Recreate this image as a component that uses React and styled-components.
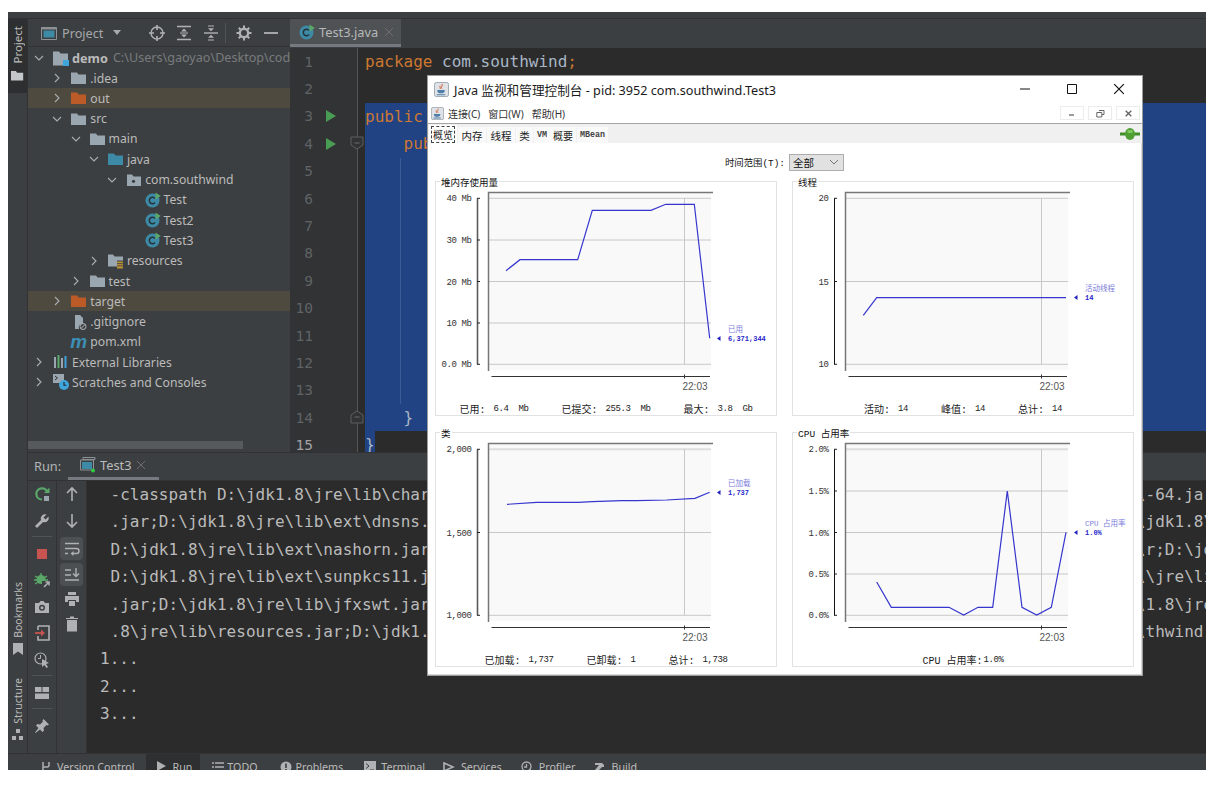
import React from "react";
import styled, { createGlobalStyle } from "styled-components";

const GlobalStyle = createGlobalStyle`
  html, body { margin: 0; padding: 0; background: #fff; }
  #root { padding: 12px 13px 17px 8px; width: 1198px; }
  * { box-sizing: border-box; }
`;

const UI = `"Noto Sans", "Noto Sans CJK SC", sans-serif`;
const MONO = `"DejaVu Sans Mono", monospace`;
const JAVA = `"Liberation Mono", "Noto Sans CJK SC", monospace`;
const ROW = 27.4;

/* ---------- icons ---------- */
const Svg = styled.svg`
  display: block;
  flex: none;
`;
const Ic = ({ s = 16, w, h, children, vb = "0 0 16 16" }) => (
  <Svg width={w || s} height={h || s} viewBox={vb}>{children}</Svg>
);

const Folder = ({ color = "#9aa7b0", s = 16 }) => (
  <Ic s={s}><path d="M0 2.5h6l1.5 2H15v9.5H0z" fill={color} /></Ic>
);
const PackageFolder = () => (
  <Ic><path d="M1 2.5h5l1.5 2H15v9.5H1z" fill="#9aa7b0" /><circle cx="7.5" cy="9.3" r="1.6" fill="#3c3f41" /></Ic>
);
const ResFolder = () => (
  <Ic>
    <path d="M0 1.5h5l1.5 2H15v4H9v6H0z" fill="#9aa7b0" />
    <path d="M9 8.5h6v7H9z" fill="#b8903a" />
    <path d="M9 10.6h6M9 12.8h6" stroke="#3c3f41" strokeWidth=".8" />
  </Ic>
);
const ModuleFolder = () => (
  <Ic>
    <path d="M0 1.5h6l1.5 2H15v7H10v5H0z" fill="#9aa7b0" />
    <path d="M10 10h6v6h-6z" fill="#3fa6dc" />
  </Ic>
);
const ClassIcon = () => (
  <Ic>
    <circle cx="7.5" cy="8.5" r="7" fill="#3d8aa6" />
    <path d="M10 6.5a3.2 3.2 0 1 0 0 4" fill="none" stroke="#26333a" strokeWidth="1.5" />
    <path d="M10.5 .5 15.8 4l-5.3 3.5z" fill="#59a869" />
  </Ic>
);
const GitIgnoreIcon = () => (
  <Ic>
    <path d="M4 1h5l3 3v5.5a4 4 0 0 0-4 5.5H4z" fill="#9aa7b0" />
    <circle cx="12" cy="12.5" r="3" fill="none" stroke="#aeb6bb" strokeWidth="1" />
    <path d="m10 14.5 4-4" stroke="#aeb6bb" />
  </Ic>
);
const PomGlyph = styled.span`
  width: 16px;
  font: italic 800 19px/16px "Liberation Sans", sans-serif;
  color: #3d8fb5;
  flex: none;
  margin: 0 1px 0 -1px;
`;
const LibIcon = () => (
  <Ic>
    <path d="M1 3h2v11H1z" fill="#9aa7b0" />
    <path d="M4.5 1h2v13h-2z" fill="#59a869" />
    <path d="M8 4h2v10H8z" fill="#9aa7b0" />
    <path d="M11.5 2h2v12h-2z" fill="#40a0d8" />
  </Ic>
);
const ScratchIcon = () => (
  <Ic>
    <path d="M0 0h11v9H0z" fill="#9aa7b0" />
    <path d="m2 2 2.5 2L2 6" fill="none" stroke="#333" />
    <circle cx="11" cy="11" r="5" fill="#3fa6dc" />
    <path d="M11 8v3.3h2.4" fill="none" stroke="#223" strokeWidth="1.1" />
  </Ic>
);
const Chevron = ({ open }) => (
  <Ic s={12} vb="0 0 12 12">
    <path
      d={open ? "M2 4l4 4 4-4" : "M4 2l4 4-4 4"}
      fill="none"
      stroke="#a9aeb2"
      strokeWidth="1.1"
    />
  </Ic>
);
const ProjectViewIcon = () => (
  <Ic>
    <path d="M.5 2.5h15v12H.5z" fill="none" stroke="#8c9296" />
    <path d="M.5 2.5h15v2H.5z" fill="#8c9296" />
    <path d="M2.5 5.5h11v7h-11z" fill="#3d8aa6" />
  </Ic>
);
const G = "#afb1b3";
const LocateIcon = () => (
  <Ic>
    <circle cx="8" cy="8" r="6" fill="none" stroke={G} strokeWidth="1.4" />
    <path d="M8 0v5M8 11v5M0 8h5M11 8h5" stroke={G} strokeWidth="1.6" />
  </Ic>
);
const ExpandIcon = () => (
  <Ic>
    <path d="M1 1.5h14M1 14.5h14" stroke={G} strokeWidth="1.4" />
    <path d="M8 3.5l3 3H5zM8 12.5l-3-3h6z" fill={G} />
    <path d="M4 8h8" stroke={G} />
  </Ic>
);
const CollapseIcon = () => (
  <Ic>
    <path d="M1 8h14" stroke={G} strokeWidth="1.4" />
    <path d="M8 6.3l-3-3h6zM8 9.7l3 3H5z" fill={G} />
    <path d="M5 1h6M5 15h6" stroke={G} />
  </Ic>
);
const GearIcon = () => (
  <Ic>
    <circle cx="8" cy="8" r="4.2" fill="none" stroke={G} strokeWidth="2.4" />
    <path d="M8 .5v3M8 12.5v3M.5 8h3M12.5 8h3M2.7 2.7l2.1 2.1M11.2 11.2l2.1 2.1M13.3 2.7l-2.1 2.1M4.8 11.2l-2.1 2.1" stroke={G} strokeWidth="2" />
  </Ic>
);
const MinusIcon = () => (
  <Ic><path d="M1 8h14" stroke={G} strokeWidth="1.8" /></Ic>
);
const RunArrow = () => (
  <Ic s={14} vb="0 0 14 14"><path d="M2 1l10 6-10 6z" fill="#499c54" /></Ic>
);
const FoldIcon = ({ up }) => (
  <Ic s={14} vb="0 0 14 14">
    <path
      d={up ? "M1 13V5l6-4 6 4v8z" : "M1 1v8l6 4 6-4V1z"}
      fill="#313335"
      stroke="#5d5f61"
    />
    <path d="M4.5 7h5" stroke="#6b6d6f" />
  </Ic>
);
const Close = ({ color = "#6e6e6e", s = 10, sw = 1 }) => (
  <Ic s={s} vb="0 0 10 10">
    <path d="M1 1l8 8M9 1l-8 8" stroke={color} strokeWidth={sw} />
  </Ic>
);
const RunTabIcon = () => (
  <Ic>
    <path d="M3 .5h12v2H3z" fill="none" stroke="#8c9296" />
    <path d="M.5 3h13v10H.5z" fill="#3c3f41" stroke="#8c9296" />
    <path d="M2 5h10v7H2z" fill="#3d8aa6" />
    <circle cx="13" cy="13.5" r="2" fill="#2ecc40" />
  </Ic>
);

const RerunIcon = () => (
  <Ic>
    <path d="M13.5 7A5.6 5.6 0 1 0 8 13.5" fill="none" stroke="#59a869" strokeWidth="2.2" />
    <path d="M10 7h5.5V1.5z" fill="#59a869" />
    <path d="M10 10h5v5h-5z" fill="#9aa7b0" />
  </Ic>
);
const WrenchIcon = () => (
  <Ic>
    <path d="M14.5 3.5l-3 3-2-2 3-3a4.2 4.2 0 0 0-5.4 5.4L1 13l2 2 6.1-6.1a4.2 4.2 0 0 0 5.4-5.4z" fill={G} />
  </Ic>
);
const StopIcon = () => (
  <Ic s={12} vb="0 0 12 12"><path d="M1 1h10v10H1z" fill="#c75450" /></Ic>
);
const DebugIcon = () => (
  <Ic>
    <circle cx="7" cy="7.5" r="4.5" fill="#59a869" />
    <path d="M1 4l3 2M13 4l-3 2M0 8h3M14 8h-3M1 12l3-2M13 12l-3-2M7 1v3" stroke="#59a869" strokeWidth="1.4" />
    <path d="M8 9h8v7H8z" fill="#3c3f41" />
    <path d="M10 15l5-5M11.5 10h3.5v3.5" fill="none" stroke={G} strokeWidth="1.5" />
  </Ic>
);
const CameraIcon = () => (
  <Ic>
    <path d="M1 4h4l1.5-2h3L11 4h4v10H1z" fill={G} />
    <circle cx="8" cy="8.8" r="3" fill="#3c3f41" />
    <circle cx="8" cy="8.8" r="1.5" fill={G} />
  </Ic>
);
const ExitIcon = () => (
  <Ic>
    <path d="M4 1h11v14H4v-4M4 5V1" fill="none" stroke={G} strokeWidth="1.6" />
    <path d="M1 8h8" stroke="#c75450" strokeWidth="1.8" />
    <path d="M7 4.5 11 8 7 11.5z" fill="#c75450" />
  </Ic>
);
const ThreadIcon = () => (
  <Ic>
    <circle cx="6.5" cy="6.5" r="5.5" fill="none" stroke={G} strokeWidth="1.2" />
    <path d="M6.5 3v3.5H4" fill="none" stroke={G} />
    <path d="M8 7l7 4-3 1 2 3-1.5 1-2-3-2.5 2z" fill={G} />
  </Ic>
);
const LayoutIcon = () => (
  <Ic>
    <path d="M1 2h6.5v5H1zM8.5 2H15v5H8.5zM1 8.5h14V14H1z" fill={G} />
  </Ic>
);
const PinIcon = () => (
  <Ic>
    <path d="M9.5 1 15 6.5l-1.5 1-1-.5-3 3 .5 2.5-1.5 1.5-2.5-2.5L1.5 15 1 14.5l3.5-4.5L2 7.5 3.5 6l2.5.5 3-3-.5-1z" fill={G} />
  </Ic>
);
const UpIcon = () => (
  <Ic><path d="M8 15V2M3 7l5-5 5 5" fill="none" stroke={G} strokeWidth="1.6" /></Ic>
);
const DownIcon = () => (
  <Ic><path d="M8 1v13M3 9l5 5 5-5" fill="none" stroke={G} strokeWidth="1.6" /></Ic>
);
const WrapIcon = () => (
  <Ic>
    <path d="M1 2.5h14M1 7.5h11.5a2.5 2.5 0 0 1 0 5H8M1 12.5h3" fill="none" stroke={G} strokeWidth="1.4" />
    <path d="M9.5 10v5L6.5 12.5z" fill={G} />
  </Ic>
);
const ScrollEndIcon = () => (
  <Ic>
    <path d="M1 3h6M1 8h6M1 13h14" stroke={G} strokeWidth="1.4" />
    <path d="M12 1v8M9 6.5l3 3 3-3" fill="none" stroke={G} strokeWidth="1.4" />
  </Ic>
);
const PrintIcon = () => (
  <Ic>
    <path d="M4 1h8v3H4zM1 5h14v6H12V9H4v2H1zM5 10h6v5H5z" fill={G} />
  </Ic>
);
const TrashIcon = () => (
  <Ic>
    <path d="M3 4h10v11.5H3zM2 2h12v1H2zM6 .5h4V2H6z" fill={G} />
  </Ic>
);

const BarBranch = () => (
  <Ic s={12} vb="0 0 12 12"><path d="M3 1v10M9 1v3a2 2 0 0 1-2 2H3" fill="none" stroke={G} strokeWidth="1.5" /></Ic>
);
const BarRun = () => (
  <Ic s={12} vb="0 0 12 12">
    <path d="M1 0l9 5-9 5z" fill={G} />
    <path d="M8 9h4v3H8z" fill="#59a869" />
  </Ic>
);
const BarList = () => (
  <Ic s={12} vb="0 0 12 12"><path d="M0 2h2M3 2h9M0 6h2M3 6h9M0 10h2M3 10h9" stroke={G} strokeWidth="1.4" /></Ic>
);
const BarProblem = () => (
  <Ic s={12} vb="0 0 12 12">
    <circle cx="6" cy="6" r="5.5" fill={G} />
    <path d="M6 2.5V7M6 8v1.8" stroke="#3c3f41" strokeWidth="1.6" />
  </Ic>
);
const BarTerm = () => (
  <Ic s={12} vb="0 0 12 12">
    <path d="M0 0h12v12H0z" fill={G} />
    <path d="M2 2.5 5 5 2 7.5M6 9h4" fill="none" stroke="#3c3f41" />
  </Ic>
);
const BarServices = () => (
  <Ic s={12} vb="0 0 12 12"><path d="M1 2l9 4-9 4z" fill="none" stroke={G} strokeWidth="1.6" /></Ic>
);
const BarProfiler = () => (
  <Ic s={12} vb="0 0 12 12">
    <circle cx="5.5" cy="5.5" r="4.5" fill="none" stroke={G} strokeWidth="1.3" />
    <path d="M5.5 3v3H3M8 8l3.5 3.5" fill="none" stroke={G} strokeWidth="1.3" />
  </Ic>
);
const BarBuild = () => (
  <Ic s={12} vb="0 0 12 12"><path d="M1 2h7l2 2v2H8L3 11 1 9l4-5H1z" fill={G} /></Ic>
);

/* window-side icons */
const JavaIcon = ({ s = 15 }) => (
  <Ic s={s}>
    <rect x=".5" y=".5" width="15" height="15" rx="2" fill="#dfe3e8" stroke="#9aa3ad" />
    <path d="M8.5 2c1.5 2-2 3 0 5M6.5 4c-1 1.5 1 2 0 3.5" fill="none" stroke="#d0542a" strokeWidth="1" />
    <path d="M3.5 8.5h8c0 3-1.5 3.5-4 3.5s-4-.5-4-3.5zM3 13h9v1H3z" fill="#4f7fa8" />
  </Ic>
);
const ConnectedIcon = () => (
  <Ic w={20} h={12} vb="0 0 20 12">
    <path d="M0 4.5h20v3H0z" fill="#3f8f2a" />
    <ellipse cx="10" cy="6" rx="5" ry="6" fill="#4f9f35" />
    <path d="M7.5 2h5v3h-5z" fill="#7fc860" />
  </Ic>
);

/* ---------- shell ---------- */
const Ide = styled.div`
  width: 1198px;
  height: 758px;
  position: relative;
  overflow: hidden;
  background: #3c3f41;
  display: flex;
  flex-direction: column;
  font-family: ${UI};
  color: #bbbbbb;
`;
const TopStrip = styled.div`
  height: 7px;
  flex: none;
  background: #3c3f41;
  border-bottom: 1px solid #323232;
`;
const Main = styled.div`
  flex: 1;
  min-height: 0;
  display: flex;
`;
const Stripe = styled.div`
  width: 20px;
  flex: none;
  display: flex;
  flex-direction: column;
  align-items: center;
  border-right: 1px solid #323232;
`;
const StripeTab = styled.div`
  width: 100%;
  display: flex;
  flex-direction: column;
  align-items: center;
  gap: ${(p) => p.$gap || 5}px;
  padding: ${(p) => p.$pad || "7px 0 11px"};
  background: ${(p) => (p.$active ? "#2d2f30" : "transparent")};
`;
const StripeLabel = styled.span`
  writing-mode: vertical-rl;
  transform: rotate(180deg);
  font-size: ${(p) => p.$size || 11.5}px;
  line-height: 14px;
`;
const Spacer = styled.div`
  flex: 1;
`;
const Center = styled.div`
  flex: 1;
  min-width: 0;
  display: flex;
  flex-direction: column;
`;
const TopRow = styled.div`
  height: 433px;
  flex: none;
  display: flex;
  overflow: hidden;
`;

/* ---------- project panel ---------- */
const ProjectPanel = styled.div`
  width: 262px;
  flex: none;
  display: flex;
  flex-direction: column;
  position: relative;
  overflow: hidden;
`;
const PanelHeader = styled.div`
  height: 28px;
  flex: none;
  display: flex;
  align-items: center;
  padding-left: 13px;
  border-bottom: 1px solid #323232;
`;
const HeaderTitle = styled.span`
  margin-left: 5px;
  width: 58px;
  font-size: 12.7px;
  color: #a6a9ab;
`;
const Caret = styled.span`
  width: 0;
  height: 0;
  border-left: 4.5px solid transparent;
  border-right: 4.5px solid transparent;
  border-top: 5px solid #a6a9ab;
  margin-right: 28px;
`;
const HeaderBtn = styled.span`
  width: 27px;
  flex: none;
  display: flex;
  justify-content: flex-start;
`;
const HeaderSep = styled.span`
  width: 1px;
  height: 20px;
  background: #515355;
  margin-right: 10px;
  margin-left: -5px;
`;
const Tree = styled.div`
  flex: 1;
  min-height: 0;
  padding-top: .6px;
`;
const TreeRow = styled.div`
  height: 20.3px;
  display: flex;
  align-items: center;
  white-space: nowrap;
  padding-left: ${(p) => 5 + p.$level * 18.3}px;
  background: ${(p) => (p.$excluded ? "#4f4a40" : "transparent")};
`;
const ChevSlot = styled.span`
  width: 20px;
  flex: none;
  display: flex;
`;
const RowText = styled.span`
  margin-left: 3px;
  font-weight: ${(p) => (p.$bold ? 700 : 400)};
  font-size: ${(p) => (p.$bold ? 12.7 : 12.2)}px;
`;
const PathHint = styled.span`
  margin-left: 5px;
  font-size: 12.6px;
  color: #787b7d;
`;
const HScroll = styled.div`
  position: absolute;
  left: 0;
  bottom: 3px;
  width: 215px;
  height: 8px;
  background: #575a5c;
`;

/* ---------- editor ---------- */
const Editor = styled.div`
  flex: 1;
  min-width: 0;
  display: flex;
  flex-direction: column;
  overflow: hidden;
  background: #2b2b2b;
`;
const TabBar = styled.div`
  height: 29px;
  flex: none;
  display: flex;
  background: #3c3f41;
`;
const FileTab = styled.div`
  width: 111px;
  height: 28px;
  background: #4e5254;
  border-bottom: 3px solid #747a80;
  display: flex;
  align-items: center;
  padding: 0 7px 0 9px;
  gap: 4px;
  font-size: 12.8px;
  color: #b6b9ba;
`;
const TabClose = styled.span`
  margin-left: auto;
`;
const CodeRow = styled.div`
  height: ${ROW}px;
  flex: none;
  display: flex;
`;
const GutterCell = styled.div`
  width: 68px;
  flex: none;
  position: relative;
  background: #313335;
  border-right: 1px solid #555;
  display: flex;
  align-items: center;
`;
const LineNo = styled.span`
  width: 23px;
  text-align: right;
  font: 14.5px ${MONO};
  color: ${(p) => (p.$current ? "#a4a3a3" : "#606366")};
`;
const RunSlot = styled.span`
  margin-left: 11px;
`;
const FoldSlot = styled.span`
  position: absolute;
  right: -7px;
  top: 6px;
`;
const CodeWrap = styled.div`
  flex: 1;
  min-width: 0;
  padding-left: 7px;
`;
const CodeLine = styled.div`
  position: relative;
  height: 100%;
  white-space: pre;
  font: 16px/${ROW}px ${MONO};
  color: #a9b7c6;
  background: ${(p) => (p.$sel ? "#214283" : "transparent")};
  width: ${(p) => (p.$short ? "9.6px" : "auto")};
  &::before {
    content: "";
    display: ${(p) => (p.$guide ? "block" : "none")};
    position: absolute;
    left: 35px;
    top: 0;
    bottom: 0;
    width: 1px;
    background: #3b5a96;
  }
`;
const Kw = styled.span`
  color: #cc7832;
`;

/* ---------- run panel ---------- */
const RunPanel = styled.div`
  flex: 1;
  min-height: 0;
  display: flex;
  flex-direction: column;
  border-top: 1px solid #323232;
`;
const RunHeader = styled.div`
  height: 28px;
  flex: none;
  display: flex;
  align-items: stretch;
  font-size: 12.8px;
  border-bottom: 1px solid #323232;
`;
const RunLabel = styled.span`
  margin: 0 0 2px 6px;
  width: 34px;
  align-self: center;
  color: #b0b3b5;
`;
const RunTab = styled.div`
  width: 91px;
  display: flex;
  align-items: center;
  gap: 4px;
  padding-left: 12px;
  border-bottom: 3px solid #747a80;
`;
const RunBody = styled.div`
  flex: 1;
  min-height: 0;
  display: flex;
`;
const ToolCol = styled.div`
  width: ${(p) => p.$w}px;
  flex: none;
  display: flex;
  flex-direction: column;
  align-items: center;
  border-right: 1px solid #323232;
`;
const ToolBtn = styled.div`
  width: 23px;
  height: ${(p) => p.$h || 26.5}px;
  flex: none;
  display: flex;
  align-items: center;
  justify-content: center;
  border-radius: 4px;
  background: ${(p) => (p.$on ? "#4c5052" : "transparent")};
  margin-top: ${(p) => (p.$on ? 3 : 0)}px;
`;
const ToolSep = styled.div`
  width: 20px;
  height: 1px;
  background: #515355;
  margin: 2px 0 3.5px;
  flex: none;
`;
const Console = styled.div`
  flex: 1;
  min-width: 0;
  background: #2b2b2b;
  overflow: hidden;
  padding-left: 13px;
`;
const ConsoleLine = styled.div`
  height: ${ROW}px;
  white-space: pre;
  font: 16px/${ROW}px ${MONO};
  letter-spacing: .04px;
  color: #bbbbbb;
  padding-left: ${(p) => (p.$out ? 0 : 10.5)}px;
`;

/* ---------- bottom bar ---------- */
const BottomBar = styled.div`
  height: 17px;
  flex: none;
  display: flex;
  overflow: hidden;
  padding-left: 24px;
  border-top: 1px solid #323232;
  font-size: 10.7px;
`;
const BarItem = styled.div`
  height: 26px;
  flex: none;
  display: flex;
  align-items: center;
  gap: ${(p) => p.$gap || 5}px;
  padding: 0 ${(p) => p.$pr}px 0 ${(p) => p.$pl}px;
  background: ${(p) => (p.$on ? "#2d2f30" : "transparent")};
`;

/* ---------- java window ---------- */
const JavaWindow = styled.div`
  position: absolute;
  left: 419px;
  top: 63px;
  width: 716px;
  height: 601px;
  background: #fff;
  border: 1px solid #9c9c9c;
  display: flex;
  flex-direction: column;
  color: #111;
  font-family: ${JAVA};
`;
const WinTitleBar = styled.div`
  height: 26px;
  flex: none;
  display: flex;
  align-items: center;
  padding-left: 6px;
  gap: 5px;
`;
const WinTitle = styled.span`
  font: 12.65px ${UI};
  color: #1a1a1a;
`;
const WinBtns = styled.div`
  margin-left: auto;
  display: flex;
  align-items: center;
`;
const WinBtn = styled.span`
  width: 47px;
  height: 26px;
  display: flex;
  align-items: center;
  justify-content: center;
`;
const MenuBar = styled.div`
  height: 22px;
  flex: none;
  display: flex;
  align-items: center;
  padding: 1px 2px 0 3px;
  border-bottom: 1px solid #a5a5a5;
  font: 10px ${UI};
  color: #333;
`;
const MenuItem = styled.span`
  margin-left: ${(p) => p.$ml}px;
`;
const MiniBtns = styled.div`
  margin-left: auto;
  display: flex;
  gap: 4px;
`;
const MiniBtn = styled.span`
  width: 24px;
  height: 14px;
  border: 1px solid #ececec;
  display: flex;
  align-items: center;
  justify-content: center;
`;
const TabStrip = styled.div`
  height: 19px;
  flex: none;
  display: flex;
  align-items: flex-end;
  gap: 1px;
  padding-left: 1px;
  background: #f0f0f0;
`;
const JTab = styled.div`
  width: ${(p) => p.$w}px;
  height: ${(p) => (p.$on ? 18 : 16)}px;
  background: ${(p) => (p.$on ? "#fff" : "#f9f9f9")};
  display: flex;
  align-items: center;
  justify-content: center;
  font-size: ${(p) => p.$size || 10.5}px;
  white-space: pre;
  color: #222;
`;
const Latin = styled.span`
  font-size: 8.4px;
  font-weight: 700;
  color: #444;
`;
const FocusBox = styled.span`
  padding: 0 1px;
  border: 1px dashed #444;
`;
const StripEnd = styled.span`
  margin-left: auto;
  align-self: center;
  margin-right: 2px;
`;
const Content = styled.div`
  flex: 1;
  min-height: 0;
  border-right: 1px solid #d8d8d8;
  border-bottom: 1px solid #d8d8d8;
  display: flex;
  flex-direction: column;
`;
const TimeRow = styled.div`
  height: 38px;
  flex: none;
  display: flex;
  align-items: center;
  justify-content: center;
  gap: 4px;
  font-size: 9.4px;
`;
const Combo = styled.div`
  width: 55px;
  height: 17px;
  background: #e1e1e1;
  border: 1px solid #adadad;
  display: flex;
  align-items: center;
  justify-content: space-between;
  padding: 0 4px 0 3px;
  font: 10.5px "Noto Sans CJK SC", sans-serif;
`;
const Grid = styled.div`
  display: grid;
  grid-template-columns: 342px 342px;
  grid-template-rows: 235px 235px;
  gap: 16px 15px;
  padding-left: 7px;
`;
const Panel = styled.div`
  position: relative;
  border: 1px solid #e2e2e2;
  display: flex;
  flex-direction: column;
`;
const PanelLegend = styled.span`
  position: absolute;
  left: 4px;
  top: -5px;
  padding: 0 1px;
  background: #fff;
  font-size: 9.5px;
  line-height: 14px;
  white-space: pre;
`;
const ChartSvg = styled.svg`
  display: block;
  flex: none;
`;
const AxisText = styled.text`
  font: 9px ${JAVA};
  letter-spacing: -.4px;
  fill: #333;
  text-anchor: end;
  white-space: pre;
`;
const TimeText = styled.text`
  font: 10px "Liberation Sans", sans-serif;
  fill: #555;
  text-anchor: middle;
`;
const LegendName = styled.text`
  font: 7.5px ${JAVA};
  fill: #7c7cdc;
`;
const LegendValue = styled.text`
  font: 700 7px ${JAVA};
  fill: #2525c8;
`;
const StatRow = styled.div`
  flex: 1;
  display: flex;
  justify-content: center;
  align-items: center;
  gap: 33px;
  padding-top: 6px;
  white-space: pre;
`;
const Stat = styled.span`
  display: flex;
  align-items: center;
  gap: ${(p) => (p.$tight ? 1 : 8)}px;
`;
const StatLabel = styled.span`
  font-size: 10px;
  color: #222;
`;
const StatValue = styled.span`
  font-size: 9px;
  letter-spacing: -.4px;
  color: #222;
`;

/* ---------- data ---------- */
const GRID5 = [17.3, 59, 100.5, 142, 183.3];
const GRID3 = [17.3, 100.5, 183.3];

const toPanel = (pts, dx, dy) =>
  pts.map(([x, y]) => `${(x / 3 - dx).toFixed(1)},${(y / 3 - dy).toFixed(1)}`).join(" ");

const CHARTS = [
  {
    key: "heap",
    title: "堆内存使用量",
    ticks: ["40 Mb", "30 Mb", "20 Mb", "10 Mb", "0.0 Mb"],
    grid: GRID5,
    axis: "#5a5a5a",
    axisW: 1.6,
    points: toPanel([[228, 272], [270, 239], [443, 239], [487, 91], [663, 91], [707, 73], [793, 73], [839, 475]], 5, 1),
    arrowY: 157.5,
    names: ["已用", "6,371,344"],
    nameY: 151,
    stats: [["已用:", "6.4  Mb"], ["已提交:", "255.3  Mb"], ["最大:", "3.8  Gb"]],
  },
  {
    key: "threads",
    title: "线程",
    ticks: ["20", "15", "10"],
    grid: GRID3,
    axis: "#111",
    axisW: 1,
    points: toPanel([[235, 406], [275, 353], [843, 353]], 7, 1),
    arrowY: 116.5,
    names: ["活动线程", "14"],
    nameY: 110,
    stats: [["活动:", "14"], ["峰值:", "14"], ["总计:", "14"]],
  },
  {
    key: "classes",
    title: "类",
    ticks: ["2,000", "1,500", "1,000"],
    grid: GRID3,
    axis: "#5a5a5a",
    axisW: 1.6,
    thick: true,
    points: toPanel([[231, 223], [320, 217], [445, 217], [487, 215], [575, 212], [620, 212], [710, 210], [795, 205], [839, 187]], 5, 2),
    arrowY: 60.5,
    names: ["已加载", "1,737"],
    nameY: 54,
    stats: [["已加载:", "1,737"], ["已卸载:", "1"], ["总计:", "1,738"]],
  },
  {
    key: "cpu",
    title: "CPU 占用率",
    ticks: ["2.0%", "1.5%", "1.0%", "0.5%", "0.0%"],
    grid: GRID5,
    axis: "#111",
    axisW: 1,
    thick: true,
    points: toPanel([[275, 456], [319, 532], [492, 532], [536, 555], [579, 532], [623, 532], [667, 183], [711, 532], [755, 555], [799, 532], [843, 307]], 7, 2),
    arrowY: 100.5,
    names: ["CPU 占用率", "1.0%"],
    nameY: 94,
    tight: true,
    stats: [["CPU 占用率:", "1.0%"]],
  },
];

const Chart = ({ c }) => (
  <ChartSvg width={340} height={213} viewBox="1 1 340 213">
    <rect x="54" y="12" width="222" height="177" fill="#f9f9f9" />
    {c.grid.map((y, i) => (
      <path
        key={y}
        d={`M54 ${y}H276`}
        stroke={c.thick && i === 0 ? "#dedede" : "#c8c8c8"}
        strokeWidth={c.thick && i === 0 ? 2 : 1}
      />
    ))}
    <path d="M249.5 17V183" stroke="#c8c8c8" />
    <path d="M53.5 190V11.5H278" fill="none" stroke="#777" strokeWidth="1.5" />
    <path d="M42.5 17.3V183.3" stroke={c.axis} strokeWidth={c.axisW} />
    {c.grid.map((y, i) => (
      <g key={y}>
        <path d={`M42 ${y}h3`} stroke="#222" />
        <AxisText x="36.5" y={y + 3}>{c.ticks[i]}</AxisText>
      </g>
    ))}
    <path d="M56.5 195.5H275" stroke="#333" />
    <path d="M249.5 193.5v4" stroke="#333" />
    <TimeText x="260" y="209">22:03</TimeText>
    <polyline points={c.points} fill="none" stroke="#3636cf" strokeWidth="1.2" />
    <path d={`M285.5 ${c.arrowY - 2.5}v5l-3.5-2.5z`} fill="#2020c0" />
    <LegendName x="293" y={c.nameY}>{c.names[0]}</LegendName>
    <LegendValue x="293" y={c.arrowY + 2.5}>{c.names[1]}</LegendValue>
  </ChartSvg>
);

const ChartPanel = ({ c }) => (
  <Panel>
    <PanelLegend>{c.title}</PanelLegend>
    <Chart c={c} />
    <StatRow>
      {c.stats.map(([l, v]) => (
        <Stat key={l} $tight={c.tight}>
          <StatLabel>{l}</StatLabel>
          <StatValue>{v}</StatValue>
        </Stat>
      ))}
    </StatRow>
  </Panel>
);

const F = "#9aa7b0";
const TREE = [
  { l: 0, open: true, icon: <ModuleFolder />, text: "demo", bold: true, hint: "C:\\Users\\gaoyao\\Desktop\\code\\demo" },
  { l: 1, icon: <Folder color={F} />, text: ".idea" },
  { l: 1, icon: <Folder color="#bd5b28" />, text: "out", ex: true },
  { l: 1, open: true, icon: <Folder color={F} />, text: "src" },
  { l: 2, open: true, icon: <Folder color={F} />, text: "main" },
  { l: 3, open: true, icon: <Folder color="#3d8aa6" />, text: "java" },
  { l: 4, open: true, icon: <PackageFolder />, text: "com.southwind" },
  { l: 5, leaf: true, icon: <ClassIcon />, text: "Test" },
  { l: 5, leaf: true, icon: <ClassIcon />, text: "Test2" },
  { l: 5, leaf: true, icon: <ClassIcon />, text: "Test3" },
  { l: 3, icon: <ResFolder />, text: "resources" },
  { l: 2, icon: <Folder color={F} />, text: "test" },
  { l: 1, icon: <Folder color="#bd5b28" />, text: "target", ex: true },
  { l: 1, leaf: true, icon: <GitIgnoreIcon />, text: ".gitignore" },
  { l: 1, leaf: true, icon: <PomGlyph>m</PomGlyph>, text: "pom.xml" },
  { l: 0, icon: <LibIcon />, text: "External Libraries" },
  { l: 0, icon: <ScratchIcon />, text: "Scratches and Consoles" },
];

const CODE = [
  <><Kw>package</Kw> com.southwind<Kw>;</Kw></>,
  "",
  <><Kw>public class</Kw> Test3 {"{"}</>,
  <>    <Kw>public static void</Kw> main(String[] args) {"{"}</>,
  "", "", "", "", "", "", "", "", "",
  "    }",
  "}",
];

const COL = 107;
const FILL = "access-bridge-64.jar;D:\\jdk1.8\\jre\\lib\\ext\\cldrdata.jar;D:\\jdk1.8\\jre\\lib\\ext\\jaccess.jar;D:\\jdk1.8\\jre\\lib\\ext\\localedata.jar;";
const cp = (head, tail) => head + FILL.slice(0, COL - head.length) + tail;
const CONSOLE = [
  cp("-classpath D:\\jdk1.8\\jre\\lib\\char", "-64.jar"),
  cp(".jar;D:\\jdk1.8\\jre\\lib\\ext\\dnsns.", "jdk1.8\\"),
  cp("D:\\jdk1.8\\jre\\lib\\ext\\nashorn.jar", "r;D:\\jd"),
  cp("D:\\jdk1.8\\jre\\lib\\ext\\sunpkcs11.j", "\\jre\\li"),
  cp(".jar;D:\\jdk1.8\\jre\\lib\\jfxswt.jar", "1.8\\jre"),
  cp(".8\\jre\\lib\\resources.jar;D:\\jdk1.", "thwind."),
];

export default function App() {
  return (
    <>
      <GlobalStyle />
      <Ide>
        <TopStrip />
        <Main>
          <Stripe>
            <StripeTab $active>
              <StripeLabel>Project</StripeLabel>
              <Folder color="#c4c7c9" s={13} />
            </StripeTab>
            <Spacer />
            <StripeTab $pad="0 0 23px">
              <StripeLabel $size={10.5}>Bookmarks</StripeLabel>
              <Ic s={12} vb="0 0 12 12"><path d="M1 0h10v12L6 8.5 1 12z" fill={G} /></Ic>
            </StripeTab>
            <StripeTab $pad="0 0 12px">
              <StripeLabel $size={10.5}>Structure</StripeLabel>
              <Ic s={12} vb="0 0 12 12"><path d="M4 0h4v4H4zM0 7h4v4H0zM7 7h4v4H7z" fill={G} /></Ic>
            </StripeTab>
          </Stripe>
          <Center>
            <TopRow>
              <ProjectPanel>
                <PanelHeader>
                  <ProjectViewIcon />
                  <HeaderTitle>Project</HeaderTitle>
                  <Caret />
                  <HeaderBtn><LocateIcon /></HeaderBtn>
                  <HeaderBtn><ExpandIcon /></HeaderBtn>
                  <HeaderBtn><CollapseIcon /></HeaderBtn>
                  <HeaderSep />
                  <HeaderBtn><GearIcon /></HeaderBtn>
                  <HeaderBtn><MinusIcon /></HeaderBtn>
                </PanelHeader>
                <Tree>
                  {TREE.map((r) => (
                    <TreeRow key={r.text} $level={r.l} $excluded={r.ex}>
                      <ChevSlot>{!r.leaf && <Chevron open={r.open} />}</ChevSlot>
                      {r.icon}
                      <RowText $bold={r.bold}>{r.text}</RowText>
                      {r.hint && <PathHint>{r.hint}</PathHint>}
                    </TreeRow>
                  ))}
                </Tree>
                <HScroll />
              </ProjectPanel>
              <Editor>
                <TabBar>
                  <FileTab>
                    <ClassIcon />
                    Test3.java
                    <TabClose><Close /></TabClose>
                  </FileTab>
                </TabBar>
                {CODE.map((c, i) => {
                  const n = i + 1;
                  return (
                    <CodeRow key={n}>
                      <GutterCell>
                        <LineNo $current={n === 15}>{n}</LineNo>
                        {(n === 3 || n === 4) && <RunSlot><RunArrow /></RunSlot>}
                        {n === 4 && <FoldSlot><FoldIcon /></FoldSlot>}
                        {n === 14 && <FoldSlot><FoldIcon up /></FoldSlot>}
                      </GutterCell>
                      <CodeWrap>
                        <CodeLine
                          $sel={n >= 3}
                          $short={n === 15}
                          $guide={n >= 5 && n <= 13}
                        >
                          {c}
                        </CodeLine>
                      </CodeWrap>
                    </CodeRow>
                  );
                })}
              </Editor>
            </TopRow>
            <RunPanel>
              <RunHeader>
                <RunLabel>Run:</RunLabel>
                <RunTab>
                  <RunTabIcon />
                  Test3
                  <Close />
                </RunTab>
              </RunHeader>
              <RunBody>
                <ToolCol $w={29}>
                  <ToolBtn><RerunIcon /></ToolBtn>
                  <ToolBtn><WrenchIcon /></ToolBtn>
                  <ToolSep />
                  <ToolBtn><StopIcon /></ToolBtn>
                  <ToolBtn><DebugIcon /></ToolBtn>
                  <ToolBtn><CameraIcon /></ToolBtn>
                  <ToolBtn><ExitIcon /></ToolBtn>
                  <ToolBtn><ThreadIcon /></ToolBtn>
                  <ToolSep />
                  <ToolBtn><LayoutIcon /></ToolBtn>
                  <ToolSep />
                  <ToolBtn><PinIcon /></ToolBtn>
                </ToolCol>
                <ToolCol $w={30}>
                  <ToolBtn><UpIcon /></ToolBtn>
                  <ToolBtn><DownIcon /></ToolBtn>
                  <ToolBtn $on $h={23}><WrapIcon /></ToolBtn>
                  <ToolBtn $on $h={23}><ScrollEndIcon /></ToolBtn>
                  <ToolBtn $h={25}><PrintIcon /></ToolBtn>
                  <ToolBtn $h={25}><TrashIcon /></ToolBtn>
                </ToolCol>
                <Console>
                  {CONSOLE.map((t) => <ConsoleLine key={t}>{t}</ConsoleLine>)}
                  {["1...", "2...", "3..."].map((t) => (
                    <ConsoleLine key={t} $out>{t}</ConsoleLine>
                  ))}
                </Console>
              </RunBody>
            </RunPanel>
          </Center>
        </Main>
        <BottomBar>
          <BarItem $pl={8} $pr={12}><BarBranch />Version Control</BarItem>
          <BarItem $on $pl={10} $pr={8} $gap={4}><BarRun />Run</BarItem>
          <BarItem $pl={12} $pr={11} $gap={3}><BarList />TODO</BarItem>
          <BarItem $pl={11} $pr={10} $gap={4}><BarProblem />Problems</BarItem>
          <BarItem $pl={11} $pr={8}><BarTerm />Terminal</BarItem>
          <BarItem $pl={10} $pr={9} $gap={6}><BarServices />Services</BarItem>
          <BarItem $pl={10} $pr={8} $gap={6}><BarProfiler />Profiler</BarItem>
          <BarItem $pl={11} $pr={9}><BarBuild />Build</BarItem>
        </BottomBar>

        <JavaWindow>
          <WinTitleBar>
            <JavaIcon />
            <WinTitle>Java 监视和管理控制台 - pid: 3952 com.southwind.Test3</WinTitle>
            <WinBtns>
              <WinBtn><Ic s={12} vb="0 0 12 12"><path d="M1 6h10" stroke="#111" /></Ic></WinBtn>
              <WinBtn><Ic s={12} vb="0 0 12 12"><path d="M1.5 1.5h9v9h-9z" fill="none" stroke="#111" /></Ic></WinBtn>
              <WinBtn><Close color="#111" s={12} /></WinBtn>
            </WinBtns>
          </WinTitleBar>
          <MenuBar>
            <JavaIcon s={13} />
            <MenuItem $ml={4}>连接(C)</MenuItem>
            <MenuItem $ml={8}>窗口(W)</MenuItem>
            <MenuItem $ml={8}>帮助(H)</MenuItem>
            <MiniBtns>
              <MiniBtn><Ic s={8} vb="0 0 8 8"><path d="M1 6h5" stroke="#666" strokeWidth="1.3" /></Ic></MiniBtn>
              <MiniBtn><Ic s={9} vb="0 0 9 9"><path d="M3 1.5h5v4H6M.8 3.5h5v4.5h-5z" fill="none" stroke="#666" /></Ic></MiniBtn>
              <MiniBtn><Close color="#666" s={7} sw={2} /></MiniBtn>
            </MiniBtns>
          </MenuBar>
          <TabStrip>
            <JTab $w={28} $on $size={10}><FocusBox>概览</FocusBox></JTab>
            <JTab $w={28}>内存</JTab>
            <JTab $w={28}>线程</JTab>
            <JTab $w={17}>类</JTab>
            <JTab $w={42} $size={10}><Latin>VM</Latin> 概要</JTab>
            <JTab $w={31}><Latin>MBean</Latin></JTab>
            <StripEnd><ConnectedIcon /></StripEnd>
          </TabStrip>
          <Content>
            <TimeRow>
              时间范围(T):
              <Combo>
                全部
                <Ic s={10} vb="0 0 10 10"><path d="M1 3l4 4 4-4" fill="none" stroke="#777" /></Ic>
              </Combo>
            </TimeRow>
            <Grid>
              {CHARTS.map((c) => <ChartPanel key={c.key} c={c} />)}
            </Grid>
          </Content>
        </JavaWindow>
      </Ide>
    </>
  );
}
